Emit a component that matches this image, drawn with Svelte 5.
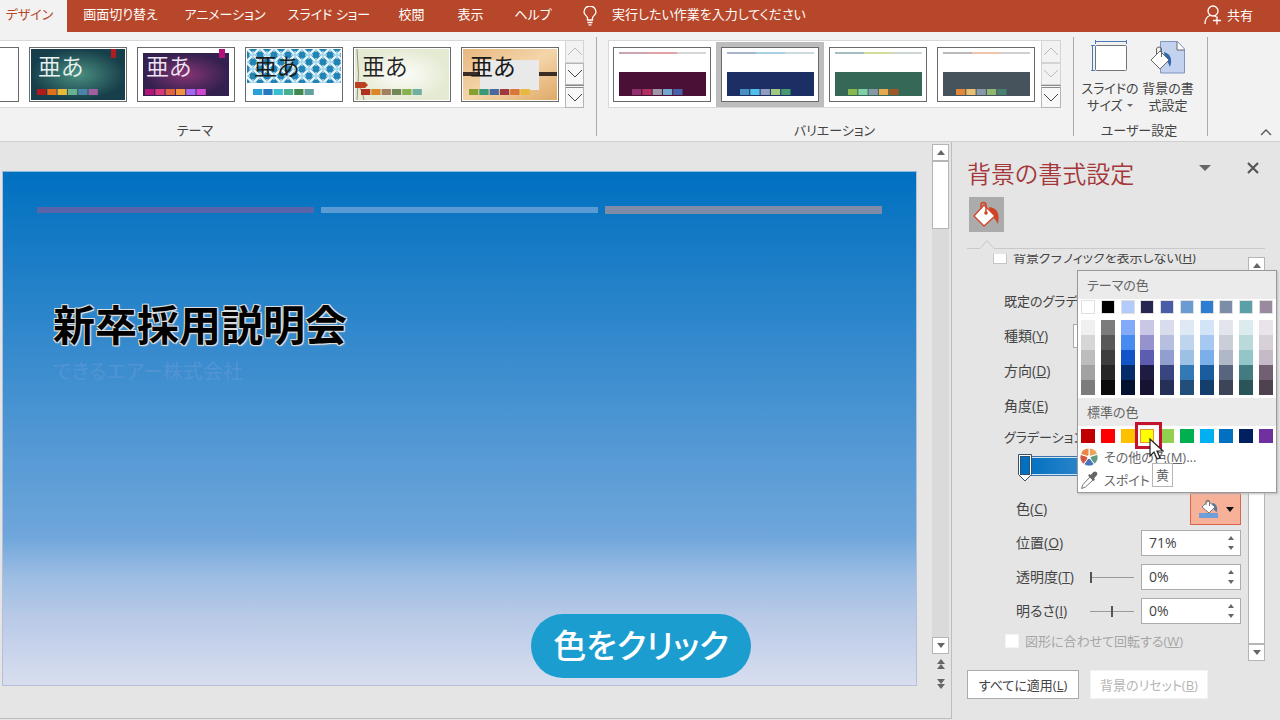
<script>
    const tabs = ['デザイン', '画面切り替え', 'アニメーション', 'スライド ショー', '校閲', '表示', 'ヘルプ'];

    const themes = [
        { id: 'teal', ink: '#e8f2f0', weight: 350, swatches: ['#b01c1c', '#e0701c', '#e8b838', '#68b090', '#4c84a8', '#a060a0'] },
        { id: 'plum', ink: '#efe4f2', weight: 350, swatches: ['#b01878', '#d83878', '#e06440', '#f09440', '#a468f0', '#d048d0'] },
        { id: 'lattice', ink: '#1a1a1a', weight: 400, swatches: ['#28a0d8', '#2878c0', '#38c0d0', '#48b090', '#408850', '#64a0a0'] },
        { id: 'wisp', ink: '#222222', weight: 350, swatches: ['#b03020', '#d88828', '#a08060', '#708858', '#88b050', '#70b0a0'] },
        { id: 'wood', ink: '#1a1a1a', weight: 400, swatches: ['#88a030', '#389878', '#4868a0', '#a03840', '#d87838', '#e8b840'] }
    ];

    const variants = [
        { fill: '#4b1035', lines: ['#c9a5ad', '#dfa3a7', '#d5d5d5'], swatches: ['#903070', '#b03060', '#a098a8', '#70a8d0', '#4860a8'] },
        { fill: '#1b2f65', lines: ['#a9b4c8', '#a9d0e4', '#ccdadd'], swatches: ['#4890c0', '#50c0e8', '#909cc0', '#a0c880', '#489870'] },
        { fill: '#356856', lines: ['#a5bdc0', '#cfdc9c', '#ccd6d4'], swatches: ['#88b850', '#80d0a8', '#8898a8', '#e8a850', '#a05828'] },
        { fill: '#46535c', lines: ['#b9b9b9', '#efc5ad', '#d0d0d0'], swatches: ['#e08838', '#e8c070', '#8898a8', '#90b870', '#488070'] }
    ];
    let selectedVariant = 1;

    // first entry is the base colour, the rest are its tints and shades
    const themeColors = [
        ['#ffffff', '#f0f0f0', '#d6d6d6', '#bdbdbd', '#a2a2a2', '#7c7c7c'],
        ['#000000', '#7c7c7c', '#585858', '#3e3e3e', '#262626', '#0c0c0c'],
        ['#b2cbfb', '#82aaf8', '#468cf0', '#1054c8', '#052c68', '#03122e'],
        ['#272652', '#c8c8e6', '#9692ce', '#5c5cb0', '#1e1c42', '#161332'],
        ['#4a5ba8', '#d9dced', '#b6bfdf', '#919fd0', '#38457f', '#263056'],
        ['#6a9bd2', '#dfe9f5', '#bfd4ed', '#9dc1e5', '#3279b6', '#224f7a'],
        ['#2d7dd2', '#d3e4f8', '#a6c9f1', '#7aafea', '#1b5c9f', '#143f6c'],
        ['#7d8da8', '#e3e5ec', '#caced9', '#b0b7c7', '#58657f', '#3c4458'],
        ['#5aa0a6', '#dcebed', '#b9d9db', '#93c5c9', '#427c80', '#2b5458'],
        ['#9a8aa0', '#eae4ea', '#d7d0d7', '#c6b9c8', '#725f74', '#4e424f']
    ];
    const standardColors = ['#c00000', '#ff0000', '#ffc000', '#ffff00', '#92d050', '#00b050', '#00b0f0', '#0070c0', '#002060', '#7030a0'];

    let position = '71%';
    let transparency = '0%';
    let brightness = '0%';
</script>

<div class="app">
    <header class="titlebar">
        <nav class="tabs">
            {#each tabs as tab, i}
                <button class="tab" class:active={i === 0}>{tab}</button>
            {/each}
        </nav>
        <label class="tell-me">
            <svg width="14" height="20" viewBox="0 0 14 20" fill="none" stroke="#fff" stroke-width="1.3">
                <path d="M4.5 14v-2C4.500 10 1 9 1 6a6 6 0 0 1 12 0c0 3-3.500 4-3.500 6v2zM4.500 16.500h5M5.500 18.800h3" />
            </svg>
            <input type="text" placeholder="実行したい作業を入力してください" aria-label="操作アシスト" />
        </label>
        <button class="share">
            <svg width="18" height="20" viewBox="0 0 18 20" fill="none" stroke="#fff" stroke-width="1.3">
                <circle cx="9" cy="6" r="5" />
                <path d="M1 19c0-5 2-7.500 5-8.500M10.500 11l2 1M13 11.500v8M9 15.500h8" />
            </svg>
            共有
        </button>
    </header>

    <section class="ribbon">
        <div class="group themes">
            <div class="gallery">
                <button class="thumb partial" aria-label="前のテーマ"></button>
                {#each themes as theme}
                    <button class="thumb" aria-label={theme.id}>
                        <svg viewBox="0 0 96 53">
                            {#if theme.id === 'teal'}
                                <defs>
                                    <radialGradient id="teal"><stop offset="0" stop-color="#4b9080" /><stop offset="1" stop-color="#173f4b" /></radialGradient>
                                </defs>
                                <rect x="1" y="1" width="94" height="51" fill="url(#teal)" />
                                <rect x="81" y="1" width="5" height="9" fill="#b01c20" />
                            {:else if theme.id === 'plum'}
                                <defs>
                                    <radialGradient id="plum"><stop offset="0" stop-color="#853474" /><stop offset="1" stop-color="#32204e" /></radialGradient>
                                </defs>
                                <rect x="5" y="5" width="86" height="43" fill="url(#plum)" />
                                <rect x="81" y="1" width="6" height="9" fill="#b2127a" />
                            {:else if theme.id === 'lattice'}
                                <defs>
                                    <pattern id="lattice" width="14" height="14" patternUnits="userSpaceOnUse">
                                        <rect width="14" height="14" fill="#2184b4" />
                                        <path d="M0 0l14 14M14 0L0 14" stroke="#e4f3fa" stroke-width="2.500" />
                                        <path d="M7 3v8M3 7h8M0 4V0h4M10 0h4v4M14 10v4h-4M4 14H0v-4" stroke="#a8d8ec" stroke-width="1.500" fill="none" />
                                    </pattern>
                                </defs>
                                <rect x="1" y="1" width="94" height="34" fill="url(#lattice)" />
                            {:else if theme.id === 'wisp'}
                                <defs>
                                    <radialGradient id="wisp"><stop offset="0" stop-color="#fdfefa" /><stop offset="1" stop-color="#e5ead3" /></radialGradient>
                                </defs>
                                <rect x="1" y="1" width="94" height="51" fill="url(#wisp)" />
                                <path d="M3 1q3 25 0 51M6 40q3 4 4 12" stroke="#8f9582" fill="none" />
                                <path d="M1 34h10l3 3-3 3H1z" fill="#bd3f22" />
                            {:else}
                                <defs>
                                    <linearGradient id="wood" x2="1" y2="1"><stop offset="0" stop-color="#e7b780" /><stop offset=".5" stop-color="#f4d5a9" /><stop offset="1" stop-color="#dfa968" /></linearGradient>
                                </defs>
                                <rect x="1" y="1" width="94" height="51" fill="url(#wood)" />
                                <path d="M1 26h94" stroke="#3b2d25" stroke-width="4" />
                                <rect x="18" y="12" width="59" height="30" fill="#e9e9e9" />
                            {/if}
                            <text x="8" y="27" font-size="23" font-weight={theme.weight} fill={theme.ink}>亜あ</text>
                            {#each theme.swatches as color, i}
                                <rect x={7 + i * 10.3} y="41" width="9.300" height="6" fill={color} />
                            {/each}
                        </svg>
                    </button>
                {/each}
                <div class="gallery-nav">
                    <button disabled aria-label="上へ"><svg viewBox="0 0 16 9"><path d="M1 8l7-7 7 7" /></svg></button>
                    <button aria-label="下へ"><svg viewBox="0 0 16 9"><path d="M1 1l7 7 7-7" /></svg></button>
                    <button class="more" aria-label="その他"><svg viewBox="0 0 16 9"><path d="M1 1l7 7 7-7" /></svg></button>
                </div>
            </div>
            <div class="group-name">テーマ</div>
        </div>

        <div class="group variants">
            <div class="gallery">
                {#each variants as variant, i}
                    <button class="thumb" class:selected={i === selectedVariant} aria-label={`バリエーション ${i + 1}`} on:click={() => (selectedVariant = i)}>
                        <svg viewBox="0 0 96 53">
                            {#each variant.lines as color, n}
                                <rect x={5 + n * 29} y="4" width="29" height="2" fill={color} />
                            {/each}
                            <rect x="5" y="24" width="87" height="24" fill={variant.fill} />
                            {#each variant.swatches as color, n}
                                <rect x={18 + n * 10.3} y="41" width="9.300" height="6" fill={color} />
                            {/each}
                        </svg>
                    </button>
                {/each}
                <div class="gallery-nav">
                    <button disabled aria-label="上へ"><svg viewBox="0 0 16 9"><path d="M1 8l7-7 7 7" /></svg></button>
                    <button disabled aria-label="下へ"><svg viewBox="0 0 16 9"><path d="M1 1l7 7 7-7" /></svg></button>
                    <button class="more" aria-label="その他"><svg viewBox="0 0 16 9"><path d="M1 1l7 7 7-7" /></svg></button>
                </div>
            </div>
            <div class="group-name">バリエーション</div>
        </div>

        <div class="group customize">
            <div class="commands">
                <button class="command">
                    <svg width="38" height="34" viewBox="2 0 38 34" fill="none">
                        <rect x="6.500" y="5.500" width="31" height="25" rx="1" fill="#fff" stroke="#737373" />
                        <path d="M6 1.500h32M6.500 0v4M37.500 0v4M3.500 5v26M2 5.500h4M2 30.500h4" stroke="#4a7ab5" />
                    </svg>
                    <span>スライドの<br />サイズ <i class="caret"></i></span>
                </button>
                <button class="command">
                    <svg width="36" height="34" viewBox="0 0 36 34" fill="none">
                        <path d="M10.500 1.500h17l7 7.500v24h-24z" fill="#c3d2ee" stroke="#7f95bd" />
                        <path d="M27 1.500V10h7.500" fill="#fff" stroke="#666" />
                        <path d="M14 12q10 3 6 15-2-5-5-8z" fill="#2e69ad" />
                        <path d="M1 20l9-9 9 9-9 9z" fill="#fff" stroke="#666" />
                        <path d="M6.500 14V9q0-2 2.500-2t2.500 2v8" stroke="#666" />
                    </svg>
                    <span>背景の書<br />式設定</span>
                </button>
            </div>
            <div class="group-name">ユーザー設定</div>
        </div>
        <button class="collapse" aria-label="リボンを折りたたむ">
            <svg width="12" height="7" viewBox="0 0 12 7" fill="none" stroke="#555" stroke-width="1.300"><path d="M1 6l5-5 5 5" /></svg>
        </button>
    </section>

    <main class="workspace">
        <section class="editor">
            <div class="canvas">
                <article class="slide">
                    <div class="rules"><i></i><i></i><i></i></div>
                    <h1>新卒採用説明会</h1>
                    <p>できるエアー株式会社</p>
                    <div class="callout">色をクリック</div>
                </article>
            </div>
            <div class="scrollbar">
                <button aria-label="上へスクロール"><i class="up"></i></button>
                <div class="track"><div class="grip"></div></div>
                <button aria-label="下へスクロール"><i class="down"></i></button>
                <button class="page" aria-label="前のスライド"><i class="up"></i><i class="up"></i></button>
                <button class="page" aria-label="次のスライド"><i class="down"></i><i class="down"></i></button>
            </div>
        </section>

        <aside class="pane">
            <div class="pane-head">
                <h2>背景の書式設定</h2>
                <button class="pane-menu" aria-label="作業ウィンドウ オプション"><i class="down large"></i></button>
                <button aria-label="閉じる">
                    <svg width="12" height="12" viewBox="0 0 12 12" stroke="#555" stroke-width="2.200"><path d="M1 1l10 10M11 1L1 11" /></svg>
                </button>
            </div>
            <button class="fill-tab" aria-label="塗りつぶし">
                <svg width="29" height="27" viewBox="0 0 29 27" fill="none">
                    <path d="M17 6q12 1 9 17-3-6-8-9z" fill="#cf4425" />
                    <path d="M2 15L12 4l11 11-11 10z" fill="#fff" stroke="#cf4425" stroke-width="1.300" />
                    <path d="M9 8V4q0-2.500 2.500-2.500T14 4v8" stroke="#cf4425" stroke-width="1.500" />
                    <circle cx="14" cy="12" r="1.800" fill="#cf4425" />
                </svg>
            </button>
            <svg class="notch" viewBox="0 0 298 10" preserveAspectRatio="xMinYMin slice" fill="none" stroke="#c9c9c9"><path d="M0 9.500h13l7-8 7 8h271" /></svg>

            <div class="pane-body">
                <div class="fields">
                    <label class="check"><input type="checkbox" /><span>背景グラフィックを表示しない(<u>H</u>)</span></label>
                    <div class="field"><span>既定のグラデーション</span></div>
                    <div class="field wide"><label for="kind">種類(<u>Y</u>)</label><select id="kind"><option></option></select></div>
                    <div class="field wide"><span>方向(<u>D</u>)</span></div>
                    <div class="field wide"><span>角度(<u>E</u>)</span></div>
                    <div class="field short"><span>グラデーションの</span></div>
                    <div class="stops">
                        <div class="ramp"></div>
                        <button class="stop" aria-label="分岐点 1">
                            <svg width="14" height="28" viewBox="0 0 14 28"><path d="M.5.500h13v20L7 27 .5 20.500z" fill="#fff" stroke="#34506e" /><rect x="2.500" y="2.500" width="9" height="18" fill="#0070c0" stroke="#34506e" /></svg>
                        </button>
                    </div>
                    <div class="field inner">
                        <span>色(<u>C</u>)</span>
                        <button class="color-button" aria-label="色">
                            <svg width="22" height="20" viewBox="0 0 22 20" fill="none">
                                <rect x="1" y="14" width="19" height="5" fill="#6f9fd8" />
                                <path d="M14 4q6 0 5 9-3-1-4-5z" fill="#56779f" />
                                <path d="M4 8l6-6 7 6-6 6z" fill="#fff" stroke="#777" />
                                <path d="M8 6V2q2-2 3.500 0v5" stroke="#777" />
                            </svg>
                            <i class="down dark"></i>
                        </button>
                    </div>
                    <div class="field inner">
                        <label for="pos">位置(<u>O</u>)</label>
                        <span class="spin"><input id="pos" type="text" bind:value={position} /><span class="steps"><button aria-label="増やす"><i class="up small"></i></button><button aria-label="減らす"><i class="down small"></i></button></span></span>
                    </div>
                    <div class="field inner">
                        <label for="alpha">透明度(<u>T</u>)</label>
                        <input class="slider" type="range" min="0" max="100" value="0" aria-label="透明度" />
                        <span class="spin"><input id="alpha" type="text" bind:value={transparency} /><span class="steps"><button aria-label="増やす"><i class="up small"></i></button><button aria-label="減らす"><i class="down small"></i></button></span></span>
                    </div>
                    <div class="field inner">
                        <label for="light">明るさ(<u>I</u>)</label>
                        <input class="slider" type="range" min="-100" max="100" value="0" aria-label="明るさ" />
                        <span class="spin"><input id="light" type="text" bind:value={brightness} /><span class="steps"><button aria-label="増やす"><i class="up small"></i></button><button aria-label="減らす"><i class="down small"></i></button></span></span>
                    </div>
                    <label class="check rotate"><input type="checkbox" disabled /><span>図形に合わせて回転する(<u>W</u>)</span></label>
                </div>
                <div class="scrollbar">
                    <button aria-label="上へスクロール"><i class="up"></i></button>
                    <div class="track"><div class="grip full"></div></div>
                    <button aria-label="下へスクロール"><i class="down"></i></button>
                </div>
            </div>

            <div class="pane-foot">
                <button>すべてに適用(<u>L</u>)</button>
                <button disabled>背景のリセット(<u>B</u>)</button>
            </div>

            <div class="picker">
                <h3>テーマの色</h3>
                <div class="swatches">
                    {#each themeColors as column}
                        <div class="column">
                            {#each column as color}
                                <button class="swatch" style="background: {color}" aria-label={color}></button>
                            {/each}
                        </div>
                    {/each}
                </div>
                <h3>標準の色</h3>
                <div class="swatches standard">
                    {#each standardColors as color}
                        <button class="swatch" class:hot={color === '#ffff00'} style="background: {color}" aria-label={color}></button>
                    {/each}
                </div>
                <button class="item">
                    <svg width="18" height="18" viewBox="0 0 18 18">
                        <g stroke="#fff"><path d="M9 9V0a9 9 0 0 1 8.560 6.220z" fill="#e8a55c" /><path d="M9 9l8.560-2.780A9 9 0 0 1 14.300 16.280z" fill="#5f9b82" /><path d="M9 9l5.300 7.280a9 9 0 0 1-10.600 0z" fill="#4a72b8" /><path d="M9 9l-5.300 7.280A9 9 0 0 1 .44 6.220z" fill="#d4573f" /><path d="M9 9L.44 6.220A9 9 0 0 1 9 0z" fill="#ea8745" /></g>
                        <circle cx="9" cy="9" r="2" fill="#fff" />
                    </svg>
                    <span>その他の色(<u>M</u>)...</span>
                </button>
                <button class="item">
                    <svg width="18" height="18" viewBox="0 0 18 18" fill="none">
                        <path d="M10 6l3 3-7.500 7-4 1.500L3 13.500z" fill="#fff" stroke="#777" />
                        <path d="M8 4.500l5.500 5.500 1.500-1.500-1-1 3-3.500q1-2-.500-3t-3 0L10.500 4l-1-1z" fill="#666" />
                    </svg>
                    <span>スポイト</span>
                </button>
                <div class="marker"></div>
                <div class="tip">黄</div>
                <svg class="pointer" width="15" height="22" viewBox="0 0 15 22"><path d="M1 1v17l4-4 3 7 3-1.300-3-6.700h6z" fill="#fff" stroke="#222" stroke-width="1.200" /></svg>
            </div>
        </aside>
    </main>
</div>

<style>
    :global(body) {
        margin: 0;
    }

    .app {
        display: flex;
        flex-direction: column;
        height: 100vh;
        overflow: hidden;
        background: #e5e5e5;
        color: #444;
        font-family: "Open Sans", "Noto Sans CJK JP", sans-serif;
        font-size: 13px;
        line-height: 18px;
        font-feature-settings: "palt";
    }

    button,
    input,
    select {
        box-sizing: border-box;
        margin: 0;
        padding: 0;
        border: 0;
        border-radius: 0;
        background: none;
        color: inherit;
        font: inherit;
        font-feature-settings: inherit;
    }

    h1,
    h2,
    h3,
    p {
        margin: 0;
        font-weight: 400;
    }

    svg {
        display: block;
        flex: none;
    }

    /* title bar */
    .titlebar {
        display: flex;
        flex: none;
        height: 32px;
        background: #b7472a;
        color: #fff;
    }

    .tabs {
        display: grid;
        grid-template-columns: 67px 107px 102px 106px 59px 59px 66px;
    }

    .tab {
        white-space: nowrap;
        padding-bottom: 4px;
    }

    .tab:first-child {
        padding-right: 8px;
    }

    .active {
        background: #f2f2f2;
        color: #b7472a;
    }

    .tell-me {
        display: flex;
        align-items: center;
        gap: 15px;
        margin-left: 17px;
    }

    .tell-me input {
        width: 260px;
        padding-bottom: 4px;
    }

    .tell-me input::placeholder {
        color: #fff;
        opacity: 1;
    }

    .share {
        display: flex;
        align-items: center;
        gap: 5px;
        margin-left: auto;
        padding: 0 27px 2px 0;
    }

    /* ribbon */
    .ribbon {
        display: flex;
        flex: none;
        box-sizing: border-box;
        height: 110px;
        padding: 5px 0;
        background: #f2f2f2;
        border-bottom: 1px solid #cfcfcf;
    }

    .group {
        padding: 3px 12px 0 11px;
        border-right: 1px solid #ababab;
    }

    .group.themes {
        padding-left: 0;
    }

    .group-name {
        margin-top: 13px;
        text-align: center;
    }

    .themes .group-name {
        padding-right: 194px;
    }

    .gallery {
        display: flex;
        gap: 10px;
        box-sizing: border-box;
        height: 68px;
        padding: 6px 0 0 4px;
        background: #fff;
        border: 1px solid #d8d8d8;
    }

    .themes .gallery {
        padding-left: 0;
        border-left: 0;
    }

    .thumb {
        width: 98px;
        height: 55px;
        background: #fff;
        border: 1px solid #6a6a6a;
    }

    .thumb.partial {
        width: 19px;
        border-left: 0;
    }

    .selected {
        box-shadow: 0 0 0 5px #bdbdbd;
    }

    .gallery-nav {
        display: grid;
        grid-template-rows: 1fr 1fr 1fr;
        width: 20px;
        margin: -7px -1px -1px -4px;
    }

    .gallery-nav button {
        display: grid;
        place-items: center;
        background: #f8f8f8;
        border: 1px solid #b5b5b5;
    }

    .gallery-nav button:disabled {
        background: #f2f2f2;
        border-color: #d4d4d4;
    }

    .gallery-nav .more {
        border-top: 3px double #8a8a8a;
    }

    .gallery-nav svg {
        width: 16px;
        fill: none;
        stroke: #444;
    }

    .gallery-nav :disabled svg {
        stroke: #bbb;
    }

    .themes .gallery-nav {
        width: 19px;
    }

    .group.customize {
        padding: 3px 10px 0 7px;
    }

    .commands {
        display: flex;
    }

    .command {
        display: flex;
        flex-direction: column;
        align-items: center;
        gap: 6px;
        width: 58px;
        height: 75px;
        line-height: 17px;
        white-space: nowrap;
    }

    .customize .group-name {
        margin-top: 6px;
    }

    .caret {
        display: inline-block;
        margin: 0 0 3px 1px;
        border: 3px solid transparent;
        border-top-color: #666;
        border-bottom: 0;
    }

    .collapse {
        align-self: flex-end;
        margin-left: auto;
        padding-right: 8px;
    }

    /* slide editor */
    .workspace {
        display: flex;
        flex: 1;
        min-height: 0;
    }

    .editor {
        display: flex;
        flex: 1;
        min-width: 0;
        margin-bottom: 1px;
        padding: 2px 2px 0 2px;
        border-right: 1px solid #bdbdbd;
        border-bottom: 1px solid #bdbdbd;
    }

    .canvas {
        flex: 1;
        padding: 27px 15px 32px 0;
    }

    .slide {
        position: relative;
        box-sizing: border-box;
        height: 100%;
        padding: 34px 34px 0;
        border: 1px solid #b5bfd8;
        border-top-color: #8ab8d8;
        background: linear-gradient(#0070c0, #6fa6db 71%, #9dbde3 79%, #b9cae7 87%, #d8deef);
    }

    .rules {
        display: grid;
        grid-template-columns: 1fr 1fr 1fr;
        gap: 7px;
        align-items: center;
        height: 8px;
    }

    .rules i {
        height: 6px;
        background: #5b9bd5;
    }

    .rules i:first-child {
        background: #5a64a8;
    }

    .rules i:last-child {
        height: 8px;
        background: #7f8ca8;
    }

    .slide h1 {
        margin: 81px 0 0 16px;
        color: #000;
        font-size: 42px;
        font-weight: 700;
        line-height: 60px;
        text-shadow: -1px -1px #ddd, 1px -1px #ddd, -1px 1px #ddd, 1px 1px #ddd, 1px 1px 2px #ccc;
    }

    .slide p {
        margin: 3px 0 0 16px;
        color: #5294d3;
        font-size: 20px;
        line-height: 28px;
    }

    .callout {
        position: absolute;
        right: 165px;
        bottom: 7px;
        width: 220px;
        border-radius: 32px;
        background: #1b9dd0;
        color: #fff;
        font-size: 33px;
        font-weight: 500;
        line-height: 64px;
        text-align: center;
    }

    /* scroll bars */
    .scrollbar {
        display: flex;
        flex: none;
        flex-direction: column;
        width: 17px;
    }

    .scrollbar button {
        display: grid;
        flex: none;
        place-content: center;
        height: 17px;
        background: #fff;
        border: 1px solid #b5b5b5;
    }

    .scrollbar .page {
        height: 20px;
        background: none;
        border: 0;
    }

    .editor .scrollbar {
        padding-bottom: 24px;
    }

    .track {
        flex: 1;
        background: #dadada;
    }

    .grip {
        box-sizing: border-box;
        height: 68px;
        background: #fff;
        border: 1px solid #b5b5b5;
    }

    .grip.full {
        height: 100%;
    }

    .up,
    .down {
        border: 4px solid transparent;
        border-bottom: 5px solid #666;
        border-top: 0;
    }

    .down {
        border-top: 5px solid #666;
        border-bottom: 0;
    }

    .large {
        border-width: 6px 6px 0;
    }

    .small.up {
        border-width: 0 3px 4px;
    }

    .small.down {
        border-width: 4px 3px 0;
    }

    .dark {
        border-top-color: #111;
    }

    /* format pane */
    .pane {
        position: relative;
        display: flex;
        flex-direction: column;
        box-sizing: border-box;
        width: 328px;
        padding: 14px 15px 21px;
    }

    .pane-head {
        display: flex;
        align-items: flex-start;
        height: 41px;
    }

    .pane-head h2 {
        flex: 1;
        color: #a4373a;
        font-size: 24px;
        font-weight: 350;
        line-height: 36px;
    }

    .pane-head button {
        display: grid;
        place-content: center;
        width: 24px;
        height: 24px;
    }

    .pane-head .pane-menu {
        margin-right: 24px;
    }

    .fill-tab {
        display: grid;
        flex: none;
        place-content: center;
        width: 35px;
        height: 35px;
        margin-left: 2px;
        background: #ababab;
    }

    .notch {
        height: 10px;
        margin-top: 7px;
    }

    .pane-body {
        display: flex;
        flex: 1;
        justify-content: space-between;
        min-height: 0;
        margin-top: 5px;
    }

    .pane-body .scrollbar {
        padding-top: 3px;
    }

    .fields {
        display: flex;
        flex-direction: column;
        width: 274px;
        overflow: hidden;
    }

    .check {
        display: flex;
        flex: none;
        align-items: center;
        gap: 6px;
        height: 26px;
        margin: -10px 0 13px 26px;
        white-space: nowrap;
    }

    .check input {
        appearance: none;
        width: 14px;
        height: 14px;
        background: #fff;
        border: 1px solid #c4c4c4;
    }

    .check.rotate {
        margin: 0 0 0 38px;
        color: #a6a6a6;
    }

    .rotate input {
        border-color: #f4f4f4;
    }

    .field {
        display: flex;
        flex: none;
        align-items: center;
        height: 35px;
        padding-left: 37px;
        white-space: nowrap;
    }

    .field.wide {
        font-size: 14px;
    }

    .field.short {
        height: 27px;
    }

    .field.inner {
        height: 34px;
        padding-left: 49px;
        font-size: 14px;
    }

    .field select {
        width: 168px;
        height: 24px;
        margin-left: auto;
        background: #fff;
        border: 1px solid #ababab;
    }

    .stops {
        position: relative;
        flex: none;
        height: 42px;
        padding: 6px 0 0 56px;
        box-sizing: border-box;
    }

    .ramp {
        height: 18px;
        background: linear-gradient(90deg, #0070c0, #6fa6db 71%, #d8deef);
        border: 1px solid #3d74a8;
        box-shadow: inset 0 0 0 1px #d4e3f2;
    }

    .stop {
        position: absolute;
        top: 4px;
        left: 51px;
    }

    .color-button {
        display: flex;
        align-items: center;
        justify-content: center;
        gap: 6px;
        width: 51px;
        height: 32px;
        margin-left: auto;
        background: #f6b198;
        border: 1px solid #d9664a;
    }

    .spin {
        display: flex;
        box-sizing: border-box;
        width: 100px;
        height: 26px;
        margin-left: auto;
        background: #fff;
        border: 1px solid #ababab;
    }

    .slider + .spin {
        margin-left: 7px;
    }

    .spin input {
        flex: 1;
        min-width: 0;
        padding-left: 7px;
    }

    .steps {
        display: grid;
        width: 18px;
        padding: 2px 0;
    }

    .steps button {
        display: grid;
        place-content: center;
    }

    .slider {
        appearance: none;
        width: 44px;
        height: 14px;
        margin-left: auto;
        background: linear-gradient(#999, #999) center / 100% 1px no-repeat;
    }

    .slider::-webkit-slider-thumb {
        appearance: none;
        width: 2px;
        height: 11px;
        background: #555;
    }

    .pane-foot {
        display: flex;
        gap: 11px;
        margin-top: 9px;
    }

    .pane-foot button {
        width: 112px;
        height: 29px;
        background: #fff;
        border: 1px solid #ababab;
        white-space: nowrap;
    }

    .pane-foot button:disabled {
        width: 118px;
        color: #b5b5b5;
        border-color: #f2f2f2;
    }

    /* colour picker */
    .picker {
        position: absolute;
        top: 128px;
        right: 3px;
        box-sizing: border-box;
        width: 200px;
        padding-bottom: 1px;
        background: #fff;
        border: 1px solid #9a9a9a;
        color: #666;
        box-shadow: 1px 1px 2px #bbb;
    }

    .picker h3 {
        height: 28px;
        padding-left: 9px;
        background: #ebebeb;
        font-size: 13px;
        line-height: 28px;
    }

    .swatches {
        display: flex;
        justify-content: space-between;
        padding: 1px 3px 3px;
    }

    .standard {
        padding: 3px 3px 2px;
    }

    .column {
        display: flex;
        flex-direction: column;
    }

    .swatch {
        width: 14px;
        height: 15px;
    }

    .column .swatch:first-child {
        height: 14px;
        margin-bottom: 6px;
        border: 1px solid #e0e0e0;
    }

    .standard .swatch {
        height: 14px;
    }

    .standard .hot {
        border: 1px solid #e8963c;
    }

    .item {
        display: flex;
        align-items: center;
        gap: 6px;
        width: 100%;
        height: 23px;
        padding-left: 2px;
    }

    .marker {
        position: absolute;
        top: 151px;
        left: 57px;
        width: 21px;
        height: 21px;
        border: 3px solid #c4122f;
    }

    .pointer {
        position: absolute;
        top: 167px;
        left: 71px;
    }

    .tip {
        position: absolute;
        top: 192px;
        left: 74px;
        width: 19px;
        background: #fff;
        border: 1px solid #b5b5b5;
        line-height: 22px;
        text-align: center;
    }
</style>
